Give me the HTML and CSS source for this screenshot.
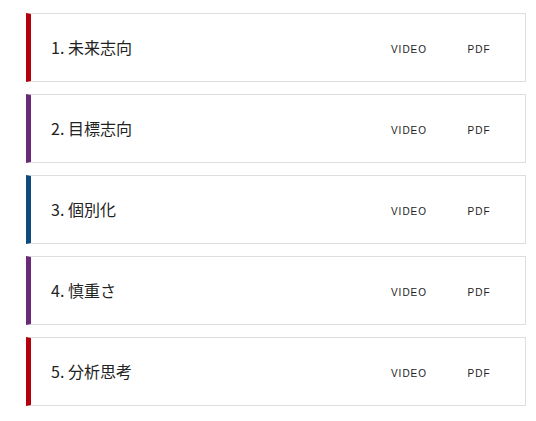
FILE: index.html
```html
<!DOCTYPE html>
<html lang="ja">
<head>
  <meta charset="UTF-8">
  <meta name="viewport" content="width=device-width, initial-scale=1.0">
  <title>Strengths</title>
  <link rel="stylesheet" href="styles.css">
</head>
<body>
  <div class="list">
    <div class="item red">
      <span class="title">1. 未来志向</span>
      <a class="link" href="#">VIDEO</a>
      <a class="link" href="#">PDF</a>
    </div>
    <div class="item purple">
      <span class="title">2. 目標志向</span>
      <a class="link" href="#">VIDEO</a>
      <a class="link" href="#">PDF</a>
    </div>
    <div class="item blue">
      <span class="title">3. 個別化</span>
      <a class="link" href="#">VIDEO</a>
      <a class="link" href="#">PDF</a>
    </div>
    <div class="item purple">
      <span class="title">4. 慎重さ</span>
      <a class="link" href="#">VIDEO</a>
      <a class="link" href="#">PDF</a>
    </div>
    <div class="item red">
      <span class="title">5. 分析思考</span>
      <a class="link" href="#">VIDEO</a>
      <a class="link" href="#">PDF</a>
    </div>
  </div>
</body>
</html>
```

FILE: styles.css
```css
body {
  margin: 0;
  background-color: #fff;
  font-family: "Noto Sans CJK JP", sans-serif;
  color: #222;
}
.list {
  display: flex;
  flex-direction: column;
  gap: 12px;
  padding: 13px 0 0 26px;
  width: 500px;
}
.item {
  display: flex;
  align-items: center;
  height: 67px;
  border: 1px solid #dedede;
  border-left: 5px solid #ccc;
  padding: 0 11px 0 20px;
}
.item.red {
  border-left-color: #b5000b;
}
.item.purple {
  border-left-color: #6b2a78;
}
.item.blue {
  border-left-color: #0d4b7c;
}
.title {
  flex: 1;
  font-size: 16px;
  margin-top: -2px;
}
.link {
  width: 70px;
  text-align: center;
  font-family: "Liberation Sans", Arial, sans-serif;
  font-size: 10px;
  letter-spacing: 1px;
  color: #222;
  text-decoration: none;
  padding-top: 4px;
}
```
